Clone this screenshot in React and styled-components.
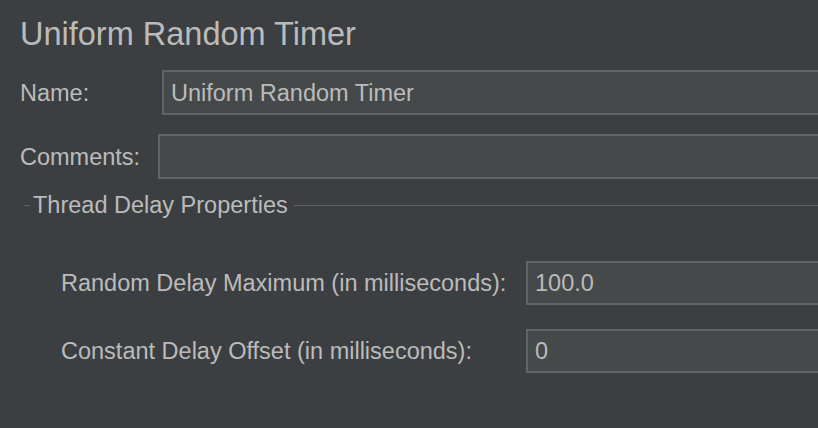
import React from 'react';
import styled, { createGlobalStyle } from 'styled-components';

const GlobalStyle = createGlobalStyle`
html, body {
    margin:0;
    padding:0;
    height:100%;
    overflow:hidden;
    background:#3c3f41;
}
#root {
    height:100%;
}
`;

const StyledWrapper = styled.div`
width:calc(100% + 30px);
height:100%;
box-sizing:border-box;
padding:16px 0 0 20px;
background:#3c3f41;
color:#bbbbbb;
font-family:"Liberation Sans", Arial, Helvetica, sans-serif;
font-size:23.5px;
`;

const Title = styled.h1`
margin:0;
font-size:32.5px;
font-weight:normal;
line-height:36px;
color:#bbbbbb;
`;

const Row = styled.div`
display:flex;
align-items:center;
margin-top:${({top})=> top}px;
`;

const Label = styled.label`
flex:0 0 ${({width})=> width}px;
white-space:nowrap;
line-height:28px;
`;

const Field = styled.input`
flex:1;
min-width:0;
height:45px;
box-sizing:border-box;
margin:0;
padding:1px 7px 0;
background:#45494a;
border:2px solid #616364;
border-radius:0;
color:#bbbbbb;
font-family:inherit;
font-size:23.5px;
outline:none;
`;

const Section = styled.section`
margin:12px 0 0 4px;
`;

const SectionHeader = styled.div`
display:flex;
align-items:center;
height:28px;
&::before{
    content:'';
    flex:0 0 6px;
    height:1px;
    background:#5e6061;
}
&::after{
    content:'';
    flex:1;
    height:1px;
    margin-left:6px;
    background:#5e6061;
}
`;

const SectionTitle = styled.span`
padding-left:3px;
line-height:28px;
white-space:nowrap;
`;

const SectionBody = styled.div`
padding:42px 0 0 37px;
display:grid;
grid-template-columns:465px 1fr;
row-gap:24px;
align-items:center;
`;

const GridField = styled(Field)`
height:44px;
`;

const props = [
    { label:'Random Delay Maximum (in milliseconds):', value:'100.0' },
    { label:'Constant Delay Offset (in milliseconds):', value:'0' },
];

const App = ()=> {
    return(
    <>
    <GlobalStyle/>
    <StyledWrapper>
        <Title>Uniform Random Timer</Title>
        <Row top={18}>
            <Label width={142}>Name:</Label>
            <Field defaultValue="Uniform Random Timer"/>
        </Row>
        <Row top={19}>
            <Label width={138}>Comments:</Label>
            <Field defaultValue=""/>
        </Row>
        <Section>
            <SectionHeader>
                <SectionTitle>Thread Delay Properties</SectionTitle>
            </SectionHeader>
            <SectionBody>
                {props.map(p=>(
                    <React.Fragment key={p.label}>
                        <Label as="span">{p.label}</Label>
                        <GridField defaultValue={p.value}/>
                    </React.Fragment>
                ))}
            </SectionBody>
        </Section>
    </StyledWrapper>
    </>
    )
}

export default App;
